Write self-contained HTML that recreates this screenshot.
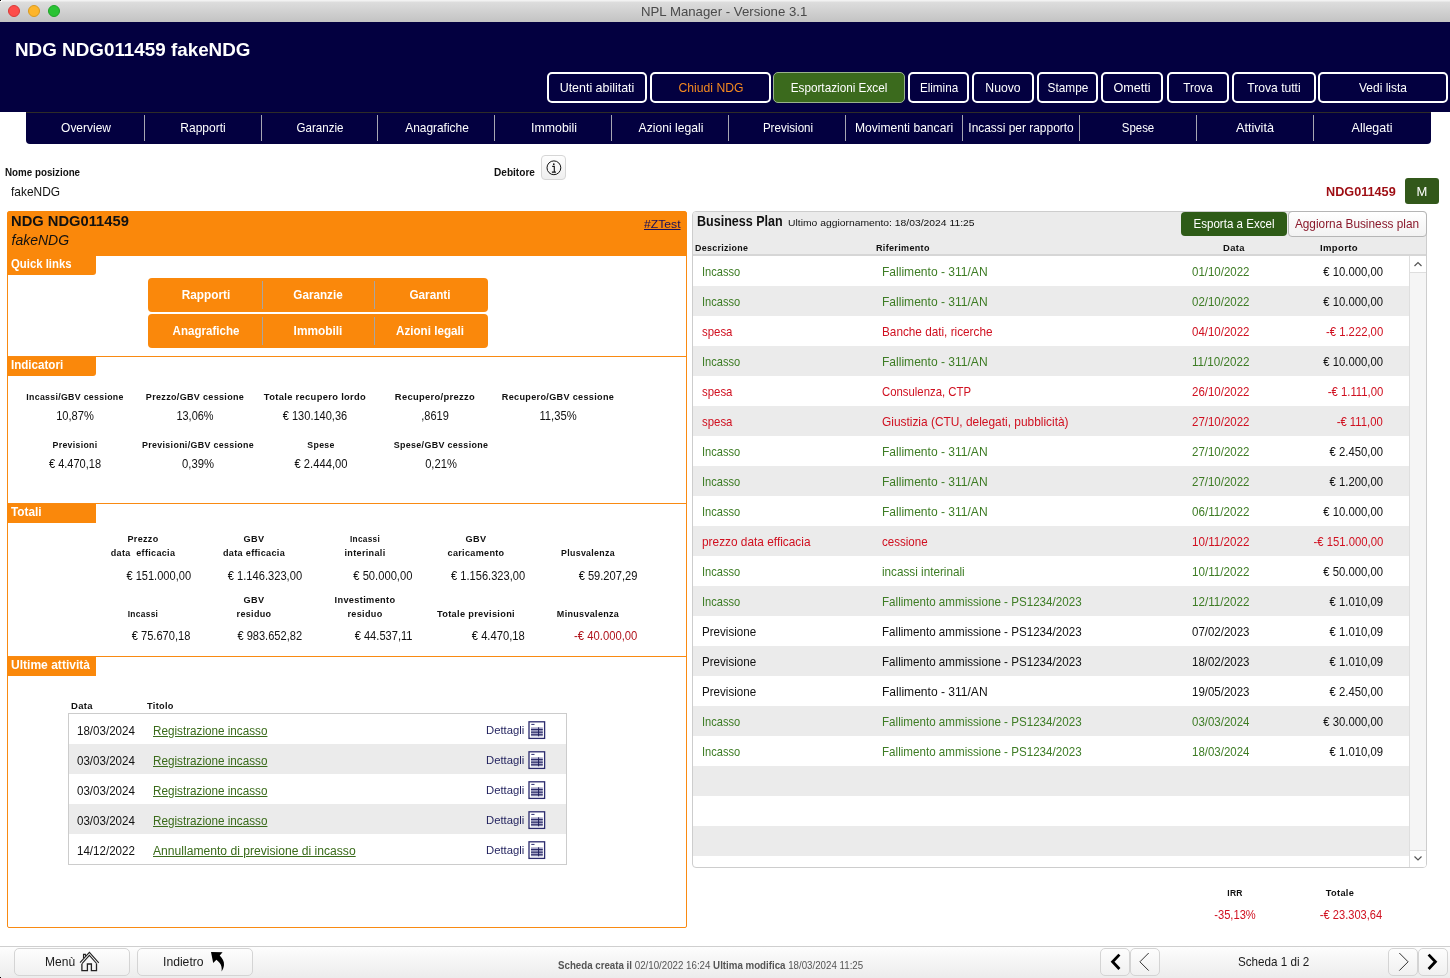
<!DOCTYPE html>
<html><head><meta charset="utf-8">
<style>
*{margin:0;padding:0;box-sizing:border-box}
html,body{width:1450px;height:978px;overflow:hidden;background:#fff;font-family:"Liberation Sans",sans-serif;color:#111}
.a{position:absolute}
.t{position:absolute;line-height:1;white-space:nowrap;}
svg{position:absolute;overflow:visible}
</style></head><body><div style="position:absolute;left:0;top:0;width:1450px;height:978px;will-change:transform">
<div class="a" style="left:0px;top:0px;width:1450px;height:22px;background:linear-gradient(#f2f2f2 0px,#f2f2f2 1px,#dddddd 2px,#c3c3c3 100%)"></div>
<div class="a" style="left:8.2px;top:5px;width:12px;height:12px;border-radius:50%;background:#fd4d4a;border:0.5px solid #d93a37"></div>
<div class="a" style="left:28px;top:5px;width:12px;height:12px;border-radius:50%;background:#fdb52b;border:0.5px solid #d99a1f"></div>
<div class="a" style="left:48px;top:5px;width:12px;height:12px;border-radius:50%;background:#2ac334;border:0.5px solid #1ea328"></div>
<div class="t" style="top:4.85px;font-size:13px;color:#4a4a4a;left:641.40px;transform:scaleX(1.017);transform-origin:0 0;">NPL Manager - Versione 3.1</div>
<div class="a" style="left:0px;top:22px;width:1450px;height:90px;background:#030040"></div>
<div class="t" style="top:40.15px;font-size:19px;font-weight:bold;color:#fff;left:14.50px;transform:scaleX(0.991);transform-origin:0 0;">NDG NDG011459 fakeNDG</div>
<div class="a" style="left:547px;top:72px;width:100px;height:31px;border-radius:5px;border:2px solid #fff;"></div>
<div class="t" style="top:80.85px;font-size:13px;color:#fff;left:297.00px;width:600px;text-align:center;transform:scaleX(0.957);transform-origin:50% 0;">Utenti abilitati</div>
<div class="a" style="left:650px;top:72px;width:121px;height:31px;border-radius:5px;border:2px solid #fff;"></div>
<div class="t" style="top:80.85px;font-size:13px;color:#f5891f;left:410.50px;width:600px;text-align:center;transform:scaleX(0.937);transform-origin:50% 0;">Chiudi NDG</div>
<div class="a" style="left:773px;top:72px;width:132px;height:31px;border-radius:5px;background:#3b6a1d;border:1px solid #9ab38c;"></div>
<div class="t" style="top:80.85px;font-size:13px;color:#fff;left:539.00px;width:600px;text-align:center;transform:scaleX(0.903);transform-origin:50% 0;">Esportazioni Excel</div>
<div class="a" style="left:908px;top:72px;width:61px;height:31px;border-radius:5px;border:2px solid #fff;"></div>
<div class="t" style="top:80.85px;font-size:13px;color:#fff;left:638.50px;width:600px;text-align:center;transform:scaleX(0.897);transform-origin:50% 0;">Elimina</div>
<div class="a" style="left:972px;top:72px;width:62px;height:31px;border-radius:5px;border:2px solid #fff;"></div>
<div class="t" style="top:80.85px;font-size:13px;color:#fff;left:703.00px;width:600px;text-align:center;transform:scaleX(0.940);transform-origin:50% 0;">Nuovo</div>
<div class="a" style="left:1037px;top:72px;width:61px;height:31px;border-radius:5px;border:2px solid #fff;"></div>
<div class="t" style="top:80.85px;font-size:13px;color:#fff;left:767.50px;width:600px;text-align:center;transform:scaleX(0.911);transform-origin:50% 0;">Stampe</div>
<div class="a" style="left:1101px;top:72px;width:62px;height:31px;border-radius:5px;border:2px solid #fff;"></div>
<div class="t" style="top:80.85px;font-size:13px;color:#fff;left:832.00px;width:600px;text-align:center;transform:scaleX(0.972);transform-origin:50% 0;">Ometti</div>
<div class="a" style="left:1167px;top:72px;width:62px;height:31px;border-radius:5px;border:2px solid #fff;"></div>
<div class="t" style="top:80.85px;font-size:13px;color:#fff;left:898.00px;width:600px;text-align:center;transform:scaleX(0.896);transform-origin:50% 0;">Trova</div>
<div class="a" style="left:1232px;top:72px;width:84px;height:31px;border-radius:5px;border:2px solid #fff;"></div>
<div class="t" style="top:80.85px;font-size:13px;color:#fff;left:974.00px;width:600px;text-align:center;transform:scaleX(0.931);transform-origin:50% 0;">Trova tutti</div>
<div class="a" style="left:1318px;top:72px;width:130px;height:31px;border-radius:5px;border:2px solid #fff;"></div>
<div class="t" style="top:80.85px;font-size:13px;color:#fff;left:1083.00px;width:600px;text-align:center;transform:scaleX(0.922);transform-origin:50% 0;">Vedi lista</div>
<div class="a" style="left:26px;top:112px;width:1405px;height:32px;background:#030040;border-radius:0 0 4px 4px"></div>
<div class="a" style="left:26px;top:112px;width:1405px;height:1px;background:#2e2c28"></div>
<div class="t" style="top:121.45px;font-size:13px;color:#fff;left:-213.85px;width:600px;text-align:center;transform:scaleX(0.920);transform-origin:50% 0;">Overview</div>
<div class="t" style="top:121.45px;font-size:13px;color:#fff;left:-96.95px;width:600px;text-align:center;transform:scaleX(0.924);transform-origin:50% 0;">Rapporti</div>
<div class="a" style="left:144px;top:115px;width:1px;height:26px;background:#a6a6b2"></div>
<div class="t" style="top:121.45px;font-size:13px;color:#fff;left:19.95px;width:600px;text-align:center;transform:scaleX(0.890);transform-origin:50% 0;">Garanzie</div>
<div class="a" style="left:261px;top:115px;width:1px;height:26px;background:#a6a6b2"></div>
<div class="t" style="top:121.45px;font-size:13px;color:#fff;left:136.85px;width:600px;text-align:center;transform:scaleX(0.916);transform-origin:50% 0;">Anagrafiche</div>
<div class="a" style="left:377px;top:115px;width:1px;height:26px;background:#a6a6b2"></div>
<div class="t" style="top:121.45px;font-size:13px;color:#fff;left:253.75px;width:600px;text-align:center;transform:scaleX(0.950);transform-origin:50% 0;">Immobili</div>
<div class="a" style="left:494px;top:115px;width:1px;height:26px;background:#a6a6b2"></div>
<div class="t" style="top:121.45px;font-size:13px;color:#fff;left:370.65px;width:600px;text-align:center;transform:scaleX(0.934);transform-origin:50% 0;">Azioni legali</div>
<div class="a" style="left:611px;top:115px;width:1px;height:26px;background:#a6a6b2"></div>
<div class="t" style="top:121.45px;font-size:13px;color:#fff;left:487.55px;width:600px;text-align:center;transform:scaleX(0.891);transform-origin:50% 0;">Previsioni</div>
<div class="a" style="left:728px;top:115px;width:1px;height:26px;background:#a6a6b2"></div>
<div class="t" style="top:121.45px;font-size:13px;color:#fff;left:604.45px;width:600px;text-align:center;transform:scaleX(0.931);transform-origin:50% 0;">Movimenti bancari</div>
<div class="a" style="left:845px;top:115px;width:1px;height:26px;background:#a6a6b2"></div>
<div class="t" style="top:121.45px;font-size:13px;color:#fff;left:721.35px;width:600px;text-align:center;transform:scaleX(0.917);transform-origin:50% 0;">Incassi per rapporto</div>
<div class="a" style="left:962px;top:115px;width:1px;height:26px;background:#a6a6b2"></div>
<div class="t" style="top:121.45px;font-size:13px;color:#fff;left:838.25px;width:600px;text-align:center;transform:scaleX(0.879);transform-origin:50% 0;">Spese</div>
<div class="a" style="left:1079px;top:115px;width:1px;height:26px;background:#a6a6b2"></div>
<div class="t" style="top:121.45px;font-size:13px;color:#fff;left:955.15px;width:600px;text-align:center;transform:scaleX(0.973);transform-origin:50% 0;">Attività</div>
<div class="a" style="left:1196px;top:115px;width:1px;height:26px;background:#a6a6b2"></div>
<div class="t" style="top:121.45px;font-size:13px;color:#fff;left:1072.05px;width:600px;text-align:center;transform:scaleX(0.957);transform-origin:50% 0;">Allegati</div>
<div class="a" style="left:1313px;top:115px;width:1px;height:26px;background:#a6a6b2"></div>
<div class="t" style="top:167.25px;font-size:11px;font-weight:bold;left:5.20px;transform:scaleX(0.890);transform-origin:0 0;">Nome posizione</div>
<div class="t" style="top:185.15px;font-size:13px;left:11.00px;transform:scaleX(0.917);transform-origin:0 0;">fakeNDG</div>
<div class="t" style="top:166.75px;font-size:11px;font-weight:bold;left:494.30px;transform:scaleX(0.917);transform-origin:0 0;">Debitore</div>
<div class="a" style="left:541px;top:155px;width:25px;height:25px;border:1px solid #d6d6d6;border-radius:4px;background:linear-gradient(#fefefe,#efefef)"></div>
<svg style="left:541px;top:155px" width="25" height="25" viewBox="0 0 25 25"><circle cx="12.9" cy="12.8" r="6.9" fill="none" stroke="#111" stroke-width="1"/><circle cx="12.8" cy="9.2" r="0.85" fill="#111"/><path d="M11.2 11.4H13.3V17M10.9 17.1H14.9" fill="none" stroke="#111" stroke-width="1.1"/></svg>
<div class="t" style="top:184.85px;font-size:13px;font-weight:bold;color:#9e0c12;left:1325.50px;transform:scaleX(0.974);transform-origin:0 0;">NDG011459</div>
<div class="a" style="left:1405px;top:178px;width:34px;height:26px;background:#32581a;border-radius:3px"></div>
<div class="t" style="top:184.95px;font-size:13px;color:#fff;left:1122.00px;width:600px;text-align:center;">M</div>
<div class="a" style="left:7px;top:211px;width:680px;height:717px;border:1px solid #f98a12;border-radius:3px 3px 2px 2px"></div>
<div class="a" style="left:7px;top:211px;width:680px;height:45px;background:#fa880b;border-radius:3px 3px 0 0"></div>
<div class="t" style="top:213.80px;font-size:14px;font-weight:bold;left:10.50px;transform:scaleX(1.052);transform-origin:0 0;">NDG NDG011459</div>
<div class="t" style="top:232.80px;font-size:14px;left:11.50px;font-style:italic;">fakeNDG</div>
<div class="t" style="top:218.65px;font-size:11px;color:#1a0f5a;left:643.50px;transform:scaleX(1.106);transform-origin:0 0;text-decoration:underline;">#ZTest</div>
<div class="a" style="left:7px;top:256px;width:89px;height:19px;background:#fa880b;border-radius:0 0 3px 0;"></div>
<div class="t" style="top:258.10px;font-size:12px;font-weight:bold;color:#fff;left:11.00px;transform:scaleX(0.945);transform-origin:0 0;">Quick links</div>
<div class="a" style="left:148px;top:278px;width:340px;height:34px;background:#fa880b;border-radius:4px"></div>
<div class="a" style="left:148px;top:314px;width:340px;height:34px;background:#fa880b;border-radius:4px"></div>
<div class="a" style="left:262px;top:281px;width:1px;height:28px;background:#a9a59f"></div>
<div class="a" style="left:374px;top:281px;width:1px;height:28px;background:#a9a59f"></div>
<div class="a" style="left:262px;top:317px;width:1px;height:28px;background:#a9a59f"></div>
<div class="a" style="left:374px;top:317px;width:1px;height:28px;background:#a9a59f"></div>
<div class="t" style="top:288.56px;font-size:12.4px;font-weight:bold;color:#fff;left:-94.50px;width:600px;text-align:center;transform:scaleX(0.952);transform-origin:50% 0;">Rapporti</div>
<div class="t" style="top:324.56px;font-size:12.4px;font-weight:bold;color:#fff;left:-94.50px;width:600px;text-align:center;transform:scaleX(0.932);transform-origin:50% 0;">Anagrafiche</div>
<div class="t" style="top:288.56px;font-size:12.4px;font-weight:bold;color:#fff;left:17.70px;width:600px;text-align:center;transform:scaleX(0.941);transform-origin:50% 0;">Garanzie</div>
<div class="t" style="top:324.56px;font-size:12.4px;font-weight:bold;color:#fff;left:17.70px;width:600px;text-align:center;transform:scaleX(0.958);transform-origin:50% 0;">Immobili</div>
<div class="t" style="top:288.56px;font-size:12.4px;font-weight:bold;color:#fff;left:130.30px;width:600px;text-align:center;transform:scaleX(0.945);transform-origin:50% 0;">Garanti</div>
<div class="t" style="top:324.56px;font-size:12.4px;font-weight:bold;color:#fff;left:130.30px;width:600px;text-align:center;transform:scaleX(0.940);transform-origin:50% 0;">Azioni legali</div>
<div class="a" style="left:7px;top:356px;width:680px;height:1px;background:#f98a12"></div>
<div class="a" style="left:7px;top:357px;width:89px;height:19px;background:#fa880b;border-radius:0 0 3px 0;"></div>
<div class="t" style="top:359.10px;font-size:12px;font-weight:bold;color:#fff;left:11.00px;transform:scaleX(0.965);transform-origin:0 0;">Indicatori</div>
<div class="t" style="top:392.47px;font-size:9.8px;font-weight:bold;letter-spacing:0.35px;left:-225.40px;width:600px;text-align:center;transform:scaleX(0.895);transform-origin:50% 0;">Incassi/GBV cessione</div>
<div class="t" style="top:409.70px;font-size:12px;left:-225.40px;width:600px;text-align:center;transform:scaleX(0.927);transform-origin:50% 0;">10,87%</div>
<div class="t" style="top:392.47px;font-size:9.8px;font-weight:bold;letter-spacing:0.35px;left:-105.20px;width:600px;text-align:center;transform:scaleX(0.921);transform-origin:50% 0;">Prezzo/GBV cessione</div>
<div class="t" style="top:409.70px;font-size:12px;left:-105.20px;width:600px;text-align:center;transform:scaleX(0.912);transform-origin:50% 0;">13,06%</div>
<div class="t" style="top:391.57px;font-size:9.8px;font-weight:bold;letter-spacing:0.35px;left:14.80px;width:600px;text-align:center;transform:scaleX(0.953);transform-origin:50% 0;">Totale recupero lordo</div>
<div class="t" style="top:409.70px;font-size:12px;left:14.80px;width:600px;text-align:center;transform:scaleX(0.920);transform-origin:50% 0;">&euro; 130.140,36</div>
<div class="t" style="top:392.47px;font-size:9.8px;font-weight:bold;letter-spacing:0.35px;left:134.80px;width:600px;text-align:center;transform:scaleX(0.954);transform-origin:50% 0;">Recupero/prezzo</div>
<div class="t" style="top:409.70px;font-size:12px;left:134.80px;width:600px;text-align:center;transform:scaleX(0.918);transform-origin:50% 0;">,8619</div>
<div class="t" style="top:392.47px;font-size:9.8px;font-weight:bold;letter-spacing:0.35px;left:257.60px;width:600px;text-align:center;transform:scaleX(0.927);transform-origin:50% 0;">Recupero/GBV cessione</div>
<div class="t" style="top:409.70px;font-size:12px;left:257.60px;width:600px;text-align:center;transform:scaleX(0.935);transform-origin:50% 0;">11,35%</div>
<div class="t" style="top:440.27px;font-size:9.8px;font-weight:bold;letter-spacing:0.35px;left:-225.40px;width:600px;text-align:center;transform:scaleX(0.892);transform-origin:50% 0;">Previsioni</div>
<div class="t" style="top:457.60px;font-size:12px;left:-225.40px;width:600px;text-align:center;transform:scaleX(0.919);transform-origin:50% 0;">&euro; 4.470,18</div>
<div class="t" style="top:440.27px;font-size:9.8px;font-weight:bold;letter-spacing:0.35px;left:-102.30px;width:600px;text-align:center;transform:scaleX(0.906);transform-origin:50% 0;">Previsioni/GBV cessione</div>
<div class="t" style="top:457.60px;font-size:12px;left:-102.30px;width:600px;text-align:center;transform:scaleX(0.938);transform-origin:50% 0;">0,39%</div>
<div class="t" style="top:440.27px;font-size:9.8px;font-weight:bold;letter-spacing:0.35px;left:20.60px;width:600px;text-align:center;transform:scaleX(0.892);transform-origin:50% 0;">Spese</div>
<div class="t" style="top:457.60px;font-size:12px;left:20.60px;width:600px;text-align:center;transform:scaleX(0.935);transform-origin:50% 0;">&euro; 2.444,00</div>
<div class="t" style="top:440.27px;font-size:9.8px;font-weight:bold;letter-spacing:0.35px;left:140.60px;width:600px;text-align:center;transform:scaleX(0.911);transform-origin:50% 0;">Spese/GBV cessione</div>
<div class="t" style="top:457.60px;font-size:12px;left:140.60px;width:600px;text-align:center;transform:scaleX(0.932);transform-origin:50% 0;">0,21%</div>
<div class="a" style="left:7px;top:503px;width:680px;height:1px;background:#f98a12"></div>
<div class="a" style="left:7px;top:504px;width:89px;height:19px;background:#fa880b;"></div>
<div class="t" style="top:506.10px;font-size:12px;font-weight:bold;color:#fff;left:11.00px;transform:scaleX(0.985);transform-origin:0 0;">Totali</div>
<div class="t" style="top:534.27px;font-size:9.8px;font-weight:bold;letter-spacing:0.35px;left:-157.30px;width:600px;text-align:center;transform:scaleX(0.920);transform-origin:50% 0;">Prezzo</div>
<div class="t" style="top:548.07px;font-size:9.8px;font-weight:bold;letter-spacing:0.35px;left:-157.30px;width:600px;text-align:center;transform:scaleX(0.922);transform-origin:50% 0;">data&nbsp; efficacia</div>
<div class="t" style="top:569.80px;font-size:12px;right:1259.30px;text-align:right;transform:scaleX(0.923);transform-origin:100% 0;">&euro; 151.000,00</div>
<div class="t" style="top:609.17px;font-size:9.8px;font-weight:bold;letter-spacing:0.35px;left:-157.30px;width:600px;text-align:center;transform:scaleX(0.855);transform-origin:50% 0;">Incassi</div>
<div class="t" style="top:629.60px;font-size:12px;right:1259.30px;text-align:right;transform:scaleX(0.926);transform-origin:100% 0;">&euro; 75.670,18</div>
<div class="t" style="top:534.27px;font-size:9.8px;font-weight:bold;letter-spacing:0.35px;left:-46.00px;width:600px;text-align:center;transform:scaleX(0.935);transform-origin:50% 0;">GBV</div>
<div class="t" style="top:548.07px;font-size:9.8px;font-weight:bold;letter-spacing:0.35px;left:-46.00px;width:600px;text-align:center;transform:scaleX(0.929);transform-origin:50% 0;">data efficacia</div>
<div class="t" style="top:569.80px;font-size:12px;right:1148.30px;text-align:right;transform:scaleX(0.928);transform-origin:100% 0;">&euro; 1.146.323,00</div>
<div class="t" style="top:595.17px;font-size:9.8px;font-weight:bold;letter-spacing:0.35px;left:-46.00px;width:600px;text-align:center;transform:scaleX(0.935);transform-origin:50% 0;">GBV</div>
<div class="t" style="top:609.17px;font-size:9.8px;font-weight:bold;letter-spacing:0.35px;left:-46.00px;width:600px;text-align:center;transform:scaleX(0.921);transform-origin:50% 0;">residuo</div>
<div class="t" style="top:629.60px;font-size:12px;right:1148.30px;text-align:right;transform:scaleX(0.923);transform-origin:100% 0;">&euro; 983.652,82</div>
<div class="t" style="top:534.27px;font-size:9.8px;font-weight:bold;letter-spacing:0.35px;left:64.80px;width:600px;text-align:center;transform:scaleX(0.844);transform-origin:50% 0;">Incassi</div>
<div class="t" style="top:548.07px;font-size:9.8px;font-weight:bold;letter-spacing:0.35px;left:64.80px;width:600px;text-align:center;transform:scaleX(0.925);transform-origin:50% 0;">interinali</div>
<div class="t" style="top:569.80px;font-size:12px;right:1037.30px;text-align:right;transform:scaleX(0.932);transform-origin:100% 0;">&euro; 50.000,00</div>
<div class="t" style="top:595.17px;font-size:9.8px;font-weight:bold;letter-spacing:0.35px;left:64.80px;width:600px;text-align:center;transform:scaleX(0.942);transform-origin:50% 0;">Investimento</div>
<div class="t" style="top:609.17px;font-size:9.8px;font-weight:bold;letter-spacing:0.35px;left:64.80px;width:600px;text-align:center;transform:scaleX(0.929);transform-origin:50% 0;">residuo</div>
<div class="t" style="top:629.60px;font-size:12px;right:1037.30px;text-align:right;transform:scaleX(0.925);transform-origin:100% 0;">&euro; 44.537,11</div>
<div class="t" style="top:534.27px;font-size:9.8px;font-weight:bold;letter-spacing:0.35px;left:176.30px;width:600px;text-align:center;transform:scaleX(0.935);transform-origin:50% 0;">GBV</div>
<div class="t" style="top:548.07px;font-size:9.8px;font-weight:bold;letter-spacing:0.35px;left:176.30px;width:600px;text-align:center;transform:scaleX(0.925);transform-origin:50% 0;">caricamento</div>
<div class="t" style="top:569.80px;font-size:12px;right:925.10px;text-align:right;transform:scaleX(0.924);transform-origin:100% 0;">&euro; 1.156.323,00</div>
<div class="t" style="top:609.17px;font-size:9.8px;font-weight:bold;letter-spacing:0.35px;left:176.30px;width:600px;text-align:center;transform:scaleX(0.939);transform-origin:50% 0;">Totale previsioni</div>
<div class="t" style="top:629.60px;font-size:12px;right:925.10px;text-align:right;transform:scaleX(0.933);transform-origin:100% 0;">&euro; 4.470,18</div>
<div class="t" style="top:548.07px;font-size:9.8px;font-weight:bold;letter-spacing:0.35px;left:288.20px;width:600px;text-align:center;transform:scaleX(0.898);transform-origin:50% 0;">Plusvalenza</div>
<div class="t" style="top:569.80px;font-size:12px;right:812.90px;text-align:right;transform:scaleX(0.927);transform-origin:100% 0;">&euro; 59.207,29</div>
<div class="t" style="top:609.17px;font-size:9.8px;font-weight:bold;letter-spacing:0.35px;left:288.20px;width:600px;text-align:center;transform:scaleX(0.918);transform-origin:50% 0;">Minusvalenza</div>
<div class="t" style="top:629.60px;font-size:12px;color:#b0141c;right:812.90px;text-align:right;transform:scaleX(0.939);transform-origin:100% 0;">-&euro; 40.000,00</div>
<div class="a" style="left:7px;top:656px;width:680px;height:1px;background:#f98a12"></div>
<div class="a" style="left:7px;top:657px;width:89px;height:19px;background:#fa880b;"></div>
<div class="t" style="top:659.10px;font-size:12px;font-weight:bold;color:#fff;left:11.00px;transform:scaleX(1.004);transform-origin:0 0;">Ultime attivit&agrave;</div>
<div class="t" style="top:701.27px;font-size:9.8px;font-weight:bold;letter-spacing:0.35px;left:71.40px;transform:scaleX(0.970);transform-origin:0 0;">Data</div>
<div class="t" style="top:701.27px;font-size:9.8px;font-weight:bold;letter-spacing:0.35px;left:146.90px;transform:scaleX(0.938);transform-origin:0 0;">Titolo</div>
<div class="a" style="left:68px;top:713px;width:499px;height:152px;border:1px solid #cccccc"></div>
<div class="a" style="left:69px;top:744px;width:497px;height:30px;background:#ebebeb"></div>
<div class="a" style="left:69px;top:804px;width:497px;height:30px;background:#ebebeb"></div>
<div class="t" style="top:724.84px;font-size:12.3px;left:77.00px;transform:scaleX(0.941);transform-origin:0 0;">18/03/2024</div>
<div class="t" style="top:724.84px;font-size:12.3px;color:#3a6b1a;left:153.30px;transform:scaleX(0.951);transform-origin:0 0;text-decoration:underline;text-underline-offset:1px;">Registrazione incasso</div>
<div class="t" style="top:724.55px;font-size:11px;color:#1f1f5c;left:485.60px;transform:scaleX(1.024);transform-origin:0 0;">Dettagli</div>
<svg style="left:528px;top:721px" width="18" height="18" viewBox="0 0 18 18"><rect x="1" y="0.8" width="15.6" height="16.6" fill="#fff" stroke="#2b2b6e" stroke-width="1.3"/><line x1="3.3" y1="3.4" x2="6.5" y2="3.4" stroke="#2b2b6e" stroke-width="1"/><rect x="3" y="6.3" width="11.8" height="9" fill="#a6a6c8"/><path d="M3 8.6H14.8M3 11.2H14.8M3 13.8H14.8M10.6 6.3V15.3" stroke="#1f1f5c" stroke-width="1"/></svg>
<div class="t" style="top:754.84px;font-size:12.3px;left:77.00px;transform:scaleX(0.941);transform-origin:0 0;">03/03/2024</div>
<div class="t" style="top:754.84px;font-size:12.3px;color:#3a6b1a;left:153.30px;transform:scaleX(0.951);transform-origin:0 0;text-decoration:underline;text-underline-offset:1px;">Registrazione incasso</div>
<div class="t" style="top:754.55px;font-size:11px;color:#1f1f5c;left:485.60px;transform:scaleX(1.024);transform-origin:0 0;">Dettagli</div>
<svg style="left:528px;top:751px" width="18" height="18" viewBox="0 0 18 18"><rect x="1" y="0.8" width="15.6" height="16.6" fill="#fff" stroke="#2b2b6e" stroke-width="1.3"/><line x1="3.3" y1="3.4" x2="6.5" y2="3.4" stroke="#2b2b6e" stroke-width="1"/><rect x="3" y="6.3" width="11.8" height="9" fill="#a6a6c8"/><path d="M3 8.6H14.8M3 11.2H14.8M3 13.8H14.8M10.6 6.3V15.3" stroke="#1f1f5c" stroke-width="1"/></svg>
<div class="t" style="top:784.84px;font-size:12.3px;left:77.00px;transform:scaleX(0.941);transform-origin:0 0;">03/03/2024</div>
<div class="t" style="top:784.84px;font-size:12.3px;color:#3a6b1a;left:153.30px;transform:scaleX(0.951);transform-origin:0 0;text-decoration:underline;text-underline-offset:1px;">Registrazione incasso</div>
<div class="t" style="top:784.55px;font-size:11px;color:#1f1f5c;left:485.60px;transform:scaleX(1.024);transform-origin:0 0;">Dettagli</div>
<svg style="left:528px;top:781px" width="18" height="18" viewBox="0 0 18 18"><rect x="1" y="0.8" width="15.6" height="16.6" fill="#fff" stroke="#2b2b6e" stroke-width="1.3"/><line x1="3.3" y1="3.4" x2="6.5" y2="3.4" stroke="#2b2b6e" stroke-width="1"/><rect x="3" y="6.3" width="11.8" height="9" fill="#a6a6c8"/><path d="M3 8.6H14.8M3 11.2H14.8M3 13.8H14.8M10.6 6.3V15.3" stroke="#1f1f5c" stroke-width="1"/></svg>
<div class="t" style="top:814.84px;font-size:12.3px;left:77.00px;transform:scaleX(0.941);transform-origin:0 0;">03/03/2024</div>
<div class="t" style="top:814.84px;font-size:12.3px;color:#3a6b1a;left:153.30px;transform:scaleX(0.951);transform-origin:0 0;text-decoration:underline;text-underline-offset:1px;">Registrazione incasso</div>
<div class="t" style="top:814.55px;font-size:11px;color:#1f1f5c;left:485.60px;transform:scaleX(1.024);transform-origin:0 0;">Dettagli</div>
<svg style="left:528px;top:811px" width="18" height="18" viewBox="0 0 18 18"><rect x="1" y="0.8" width="15.6" height="16.6" fill="#fff" stroke="#2b2b6e" stroke-width="1.3"/><line x1="3.3" y1="3.4" x2="6.5" y2="3.4" stroke="#2b2b6e" stroke-width="1"/><rect x="3" y="6.3" width="11.8" height="9" fill="#a6a6c8"/><path d="M3 8.6H14.8M3 11.2H14.8M3 13.8H14.8M10.6 6.3V15.3" stroke="#1f1f5c" stroke-width="1"/></svg>
<div class="t" style="top:844.84px;font-size:12.3px;left:77.00px;transform:scaleX(0.941);transform-origin:0 0;">14/12/2022</div>
<div class="t" style="top:844.84px;font-size:12.3px;color:#3a6b1a;left:153.30px;transform:scaleX(0.985);transform-origin:0 0;text-decoration:underline;text-underline-offset:1px;">Annullamento di previsione di incasso</div>
<div class="t" style="top:844.55px;font-size:11px;color:#1f1f5c;left:485.60px;transform:scaleX(1.024);transform-origin:0 0;">Dettagli</div>
<svg style="left:528px;top:841px" width="18" height="18" viewBox="0 0 18 18"><rect x="1" y="0.8" width="15.6" height="16.6" fill="#fff" stroke="#2b2b6e" stroke-width="1.3"/><line x1="3.3" y1="3.4" x2="6.5" y2="3.4" stroke="#2b2b6e" stroke-width="1"/><rect x="3" y="6.3" width="11.8" height="9" fill="#a6a6c8"/><path d="M3 8.6H14.8M3 11.2H14.8M3 13.8H14.8M10.6 6.3V15.3" stroke="#1f1f5c" stroke-width="1"/></svg>
<div class="a" style="left:692px;top:211px;width:735px;height:657px;border:1px solid #cdcdcd;border-radius:4px 4px 4px 4px;background:#fff"></div>
<div class="a" style="left:693px;top:212px;width:733px;height:42px;background:#ebebeb;border-radius:3px 3px 0 0"></div>
<div class="a" style="left:693px;top:254px;width:733px;height:2px;background:#d6d6d6"></div>
<div class="a" style="left:693px;top:286px;width:717px;height:30px;background:#ebebeb"></div>
<div class="a" style="left:693px;top:346px;width:717px;height:30px;background:#ebebeb"></div>
<div class="a" style="left:693px;top:406px;width:717px;height:30px;background:#ebebeb"></div>
<div class="a" style="left:693px;top:466px;width:717px;height:30px;background:#ebebeb"></div>
<div class="a" style="left:693px;top:526px;width:717px;height:30px;background:#ebebeb"></div>
<div class="a" style="left:693px;top:586px;width:717px;height:30px;background:#ebebeb"></div>
<div class="a" style="left:693px;top:646px;width:717px;height:30px;background:#ebebeb"></div>
<div class="a" style="left:693px;top:706px;width:717px;height:30px;background:#ebebeb"></div>
<div class="a" style="left:693px;top:766px;width:717px;height:30px;background:#ebebeb"></div>
<div class="a" style="left:693px;top:826px;width:717px;height:30px;background:#ebebeb"></div>
<div class="t" style="top:214.10px;font-size:14px;font-weight:bold;left:696.60px;transform:scaleX(0.895);transform-origin:0 0;">Business Plan</div>
<div class="t" style="top:217.93px;font-size:9.5px;left:787.70px;transform:scaleX(1.088);transform-origin:0 0;">Ultimo aggiornamento: 18/03/2024 11:25</div>
<div class="t" style="top:243.07px;font-size:9.8px;font-weight:bold;letter-spacing:0.35px;left:695.40px;transform:scaleX(0.906);transform-origin:0 0;">Descrizione</div>
<div class="t" style="top:243.07px;font-size:9.8px;font-weight:bold;letter-spacing:0.35px;left:876.40px;transform:scaleX(0.923);transform-origin:0 0;">Riferimento</div>
<div class="t" style="top:242.87px;font-size:9.8px;font-weight:bold;letter-spacing:0.35px;left:933.70px;width:600px;text-align:center;transform:scaleX(0.961);transform-origin:50% 0;">Data</div>
<div class="t" style="top:242.87px;font-size:9.8px;font-weight:bold;letter-spacing:0.35px;left:1039.30px;width:600px;text-align:center;transform:scaleX(0.975);transform-origin:50% 0;">Importo</div>
<div class="a" style="left:1181px;top:212px;width:106px;height:24px;background:#2e5b17;border-radius:4px"></div>
<div class="t" style="top:217.25px;font-size:13px;color:#fff;left:933.80px;width:600px;text-align:center;transform:scaleX(0.889);transform-origin:50% 0;">Esporta a Excel</div>
<div class="a" style="left:1288px;top:211px;width:139px;height:26px;background:linear-gradient(#ffffff,#f2f2f2);border:1px solid #b5b5b5;border-radius:4px"></div>
<div class="t" style="top:217.25px;font-size:13px;color:#8a1a2c;left:1057.20px;width:600px;text-align:center;transform:scaleX(0.909);transform-origin:50% 0;">Aggiorna Business plan</div>
<div class="a" style="left:1409px;top:256px;width:1px;height:611px;background:#dedede"></div>
<div class="a" style="left:1410px;top:256px;width:16px;height:611px;background:#f5f5f5;border-radius:0 0 3px 0"></div>
<div class="a" style="left:1410px;top:256px;width:16px;height:17px;background:#fff;border-bottom:1px solid #dedede"></div>
<div class="a" style="left:1410px;top:850px;width:16px;height:17px;background:#fff;border-top:1px solid #dedede;border-radius:0 0 3px 0"></div>
<svg style="left:1410px;top:256px" width="16" height="17"><path d="M4.5 10L8 6.5L11.5 10" fill="none" stroke="#555" stroke-width="1.2"/></svg>
<svg style="left:1410px;top:850px" width="16" height="17"><path d="M4.5 6.5L8 10L11.5 6.5" fill="none" stroke="#555" stroke-width="1.2"/></svg>
<div class="t" style="top:266.20px;font-size:12.7px;color:#3d7c24;left:701.50px;transform:scaleX(0.875);transform-origin:0 0;">Incasso</div>
<div class="t" style="top:266.20px;font-size:12.7px;color:#3d7c24;left:882.30px;transform:scaleX(0.950);transform-origin:0 0;">Fallimento - 311/AN</div>
<div class="t" style="top:266.20px;font-size:12.7px;color:#3d7c24;left:1191.80px;transform:scaleX(0.905);transform-origin:0 0;">01/10/2022</div>
<div class="t" style="top:266.20px;font-size:12.7px;right:67.10px;text-align:right;transform:scaleX(0.891);transform-origin:100% 0;">&euro; 10.000,00</div>
<div class="t" style="top:296.20px;font-size:12.7px;color:#3d7c24;left:701.50px;transform:scaleX(0.875);transform-origin:0 0;">Incasso</div>
<div class="t" style="top:296.20px;font-size:12.7px;color:#3d7c24;left:882.30px;transform:scaleX(0.950);transform-origin:0 0;">Fallimento - 311/AN</div>
<div class="t" style="top:296.20px;font-size:12.7px;color:#3d7c24;left:1191.80px;transform:scaleX(0.905);transform-origin:0 0;">02/10/2022</div>
<div class="t" style="top:296.20px;font-size:12.7px;right:67.10px;text-align:right;transform:scaleX(0.891);transform-origin:100% 0;">&euro; 10.000,00</div>
<div class="t" style="top:326.20px;font-size:12.7px;color:#d01020;left:701.50px;transform:scaleX(0.900);transform-origin:0 0;">spesa</div>
<div class="t" style="top:326.20px;font-size:12.7px;color:#d01020;left:882.30px;transform:scaleX(0.927);transform-origin:0 0;">Banche dati, ricerche</div>
<div class="t" style="top:326.20px;font-size:12.7px;color:#d01020;left:1191.80px;transform:scaleX(0.905);transform-origin:0 0;">04/10/2022</div>
<div class="t" style="top:326.20px;font-size:12.7px;color:#d01020;right:67.10px;text-align:right;transform:scaleX(0.891);transform-origin:100% 0;">-&euro; 1.222,00</div>
<div class="t" style="top:356.20px;font-size:12.7px;color:#3d7c24;left:701.50px;transform:scaleX(0.875);transform-origin:0 0;">Incasso</div>
<div class="t" style="top:356.20px;font-size:12.7px;color:#3d7c24;left:882.30px;transform:scaleX(0.950);transform-origin:0 0;">Fallimento - 311/AN</div>
<div class="t" style="top:356.20px;font-size:12.7px;color:#3d7c24;left:1191.80px;transform:scaleX(0.918);transform-origin:0 0;">11/10/2022</div>
<div class="t" style="top:356.20px;font-size:12.7px;right:67.10px;text-align:right;transform:scaleX(0.891);transform-origin:100% 0;">&euro; 10.000,00</div>
<div class="t" style="top:386.20px;font-size:12.7px;color:#d01020;left:701.50px;transform:scaleX(0.900);transform-origin:0 0;">spesa</div>
<div class="t" style="top:386.20px;font-size:12.7px;color:#d01020;left:882.30px;transform:scaleX(0.895);transform-origin:0 0;">Consulenza, CTP</div>
<div class="t" style="top:386.20px;font-size:12.7px;color:#d01020;left:1191.80px;transform:scaleX(0.905);transform-origin:0 0;">26/10/2022</div>
<div class="t" style="top:386.20px;font-size:12.7px;color:#d01020;right:67.10px;text-align:right;transform:scaleX(0.891);transform-origin:100% 0;">-&euro; 1.111,00</div>
<div class="t" style="top:416.20px;font-size:12.7px;color:#d01020;left:701.50px;transform:scaleX(0.900);transform-origin:0 0;">spesa</div>
<div class="t" style="top:416.20px;font-size:12.7px;color:#d01020;left:882.30px;transform:scaleX(0.938);transform-origin:0 0;">Giustizia (CTU, delegati, pubblicit&agrave;)</div>
<div class="t" style="top:416.20px;font-size:12.7px;color:#d01020;left:1191.80px;transform:scaleX(0.905);transform-origin:0 0;">27/10/2022</div>
<div class="t" style="top:416.20px;font-size:12.7px;color:#d01020;right:67.10px;text-align:right;transform:scaleX(0.891);transform-origin:100% 0;">-&euro; 111,00</div>
<div class="t" style="top:446.20px;font-size:12.7px;color:#3d7c24;left:701.50px;transform:scaleX(0.875);transform-origin:0 0;">Incasso</div>
<div class="t" style="top:446.20px;font-size:12.7px;color:#3d7c24;left:882.30px;transform:scaleX(0.950);transform-origin:0 0;">Fallimento - 311/AN</div>
<div class="t" style="top:446.20px;font-size:12.7px;color:#3d7c24;left:1191.80px;transform:scaleX(0.905);transform-origin:0 0;">27/10/2022</div>
<div class="t" style="top:446.20px;font-size:12.7px;right:67.10px;text-align:right;transform:scaleX(0.891);transform-origin:100% 0;">&euro; 2.450,00</div>
<div class="t" style="top:476.20px;font-size:12.7px;color:#3d7c24;left:701.50px;transform:scaleX(0.875);transform-origin:0 0;">Incasso</div>
<div class="t" style="top:476.20px;font-size:12.7px;color:#3d7c24;left:882.30px;transform:scaleX(0.950);transform-origin:0 0;">Fallimento - 311/AN</div>
<div class="t" style="top:476.20px;font-size:12.7px;color:#3d7c24;left:1191.80px;transform:scaleX(0.905);transform-origin:0 0;">27/10/2022</div>
<div class="t" style="top:476.20px;font-size:12.7px;right:67.10px;text-align:right;transform:scaleX(0.891);transform-origin:100% 0;">&euro; 1.200,00</div>
<div class="t" style="top:506.20px;font-size:12.7px;color:#3d7c24;left:701.50px;transform:scaleX(0.875);transform-origin:0 0;">Incasso</div>
<div class="t" style="top:506.20px;font-size:12.7px;color:#3d7c24;left:882.30px;transform:scaleX(0.950);transform-origin:0 0;">Fallimento - 311/AN</div>
<div class="t" style="top:506.20px;font-size:12.7px;color:#3d7c24;left:1191.80px;transform:scaleX(0.918);transform-origin:0 0;">06/11/2022</div>
<div class="t" style="top:506.20px;font-size:12.7px;right:67.10px;text-align:right;transform:scaleX(0.891);transform-origin:100% 0;">&euro; 10.000,00</div>
<div class="t" style="top:536.21px;font-size:12.7px;color:#d01020;left:701.50px;transform:scaleX(0.934);transform-origin:0 0;">prezzo data efficacia</div>
<div class="t" style="top:536.21px;font-size:12.7px;color:#d01020;left:882.30px;transform:scaleX(0.912);transform-origin:0 0;">cessione</div>
<div class="t" style="top:536.21px;font-size:12.7px;color:#d01020;left:1191.80px;transform:scaleX(0.918);transform-origin:0 0;">10/11/2022</div>
<div class="t" style="top:536.21px;font-size:12.7px;color:#d01020;right:67.10px;text-align:right;transform:scaleX(0.891);transform-origin:100% 0;">-&euro; 151.000,00</div>
<div class="t" style="top:566.21px;font-size:12.7px;color:#3d7c24;left:701.50px;transform:scaleX(0.875);transform-origin:0 0;">Incasso</div>
<div class="t" style="top:566.21px;font-size:12.7px;color:#3d7c24;left:882.30px;transform:scaleX(0.923);transform-origin:0 0;">incassi interinali</div>
<div class="t" style="top:566.21px;font-size:12.7px;color:#3d7c24;left:1191.80px;transform:scaleX(0.918);transform-origin:0 0;">10/11/2022</div>
<div class="t" style="top:566.21px;font-size:12.7px;right:67.10px;text-align:right;transform:scaleX(0.891);transform-origin:100% 0;">&euro; 50.000,00</div>
<div class="t" style="top:596.21px;font-size:12.7px;color:#3d7c24;left:701.50px;transform:scaleX(0.875);transform-origin:0 0;">Incasso</div>
<div class="t" style="top:596.21px;font-size:12.7px;color:#3d7c24;left:882.30px;transform:scaleX(0.916);transform-origin:0 0;">Fallimento ammissione - PS1234/2023</div>
<div class="t" style="top:596.21px;font-size:12.7px;color:#3d7c24;left:1191.80px;transform:scaleX(0.918);transform-origin:0 0;">12/11/2022</div>
<div class="t" style="top:596.21px;font-size:12.7px;right:67.10px;text-align:right;transform:scaleX(0.891);transform-origin:100% 0;">&euro; 1.010,09</div>
<div class="t" style="top:626.21px;font-size:12.7px;left:701.50px;transform:scaleX(0.914);transform-origin:0 0;">Previsione</div>
<div class="t" style="top:626.21px;font-size:12.7px;left:882.30px;transform:scaleX(0.916);transform-origin:0 0;">Fallimento ammissione - PS1234/2023</div>
<div class="t" style="top:626.21px;font-size:12.7px;left:1191.80px;transform:scaleX(0.905);transform-origin:0 0;">07/02/2023</div>
<div class="t" style="top:626.21px;font-size:12.7px;right:67.10px;text-align:right;transform:scaleX(0.891);transform-origin:100% 0;">&euro; 1.010,09</div>
<div class="t" style="top:656.21px;font-size:12.7px;left:701.50px;transform:scaleX(0.914);transform-origin:0 0;">Previsione</div>
<div class="t" style="top:656.21px;font-size:12.7px;left:882.30px;transform:scaleX(0.916);transform-origin:0 0;">Fallimento ammissione - PS1234/2023</div>
<div class="t" style="top:656.21px;font-size:12.7px;left:1191.80px;transform:scaleX(0.905);transform-origin:0 0;">18/02/2023</div>
<div class="t" style="top:656.21px;font-size:12.7px;right:67.10px;text-align:right;transform:scaleX(0.891);transform-origin:100% 0;">&euro; 1.010,09</div>
<div class="t" style="top:686.21px;font-size:12.7px;left:701.50px;transform:scaleX(0.914);transform-origin:0 0;">Previsione</div>
<div class="t" style="top:686.21px;font-size:12.7px;left:882.30px;transform:scaleX(0.950);transform-origin:0 0;">Fallimento - 311/AN</div>
<div class="t" style="top:686.21px;font-size:12.7px;left:1191.80px;transform:scaleX(0.905);transform-origin:0 0;">19/05/2023</div>
<div class="t" style="top:686.21px;font-size:12.7px;right:67.10px;text-align:right;transform:scaleX(0.891);transform-origin:100% 0;">&euro; 2.450,00</div>
<div class="t" style="top:716.21px;font-size:12.7px;color:#3d7c24;left:701.50px;transform:scaleX(0.875);transform-origin:0 0;">Incasso</div>
<div class="t" style="top:716.21px;font-size:12.7px;color:#3d7c24;left:882.30px;transform:scaleX(0.916);transform-origin:0 0;">Fallimento ammissione - PS1234/2023</div>
<div class="t" style="top:716.21px;font-size:12.7px;color:#3d7c24;left:1191.80px;transform:scaleX(0.905);transform-origin:0 0;">03/03/2024</div>
<div class="t" style="top:716.21px;font-size:12.7px;right:67.10px;text-align:right;transform:scaleX(0.891);transform-origin:100% 0;">&euro; 30.000,00</div>
<div class="t" style="top:746.21px;font-size:12.7px;color:#3d7c24;left:701.50px;transform:scaleX(0.875);transform-origin:0 0;">Incasso</div>
<div class="t" style="top:746.21px;font-size:12.7px;color:#3d7c24;left:882.30px;transform:scaleX(0.916);transform-origin:0 0;">Fallimento ammissione - PS1234/2023</div>
<div class="t" style="top:746.21px;font-size:12.7px;color:#3d7c24;left:1191.80px;transform:scaleX(0.905);transform-origin:0 0;">18/03/2024</div>
<div class="t" style="top:746.21px;font-size:12.7px;right:67.10px;text-align:right;transform:scaleX(0.891);transform-origin:100% 0;">&euro; 1.010,09</div>
<div class="t" style="top:888.17px;font-size:9.8px;font-weight:bold;letter-spacing:0.35px;left:934.50px;width:600px;text-align:center;transform:scaleX(0.866);transform-origin:50% 0;">IRR</div>
<div class="t" style="top:888.17px;font-size:9.8px;font-weight:bold;letter-spacing:0.35px;left:1039.90px;width:600px;text-align:center;transform:scaleX(0.941);transform-origin:50% 0;">Totale</div>
<div class="t" style="top:908.77px;font-size:12.5px;color:#d01020;left:934.70px;width:600px;text-align:center;transform:scaleX(0.893);transform-origin:50% 0;">-35,13%</div>
<div class="t" style="top:908.77px;font-size:12.5px;color:#d01020;right:67.40px;text-align:right;transform:scaleX(0.888);transform-origin:100% 0;">-&euro; 23.303,64</div>
<div class="a" style="left:0px;top:946px;width:1450px;height:32px;background:linear-gradient(#fdfdfd,#ececec);border-top:1px solid #cfcfcf"></div>
<div class="a" style="left:14px;top:948px;width:116px;height:28px;border:1px solid #d4d4d4;border-radius:5px;background:linear-gradient(#fdfdfd,#f0f0f0)"></div>
<div class="a" style="left:137px;top:948px;width:116px;height:28px;border:1px solid #d4d4d4;border-radius:5px;background:linear-gradient(#fdfdfd,#f0f0f0)"></div>
<div class="t" style="top:955.35px;font-size:13px;color:#1a1a1a;left:44.80px;transform:scaleX(0.926);transform-origin:0 0;">Men&ugrave;</div>
<svg style="left:76px;top:948px" width="28" height="28" viewBox="0 0 28 28"><g fill="none" stroke="#222" stroke-width="1.1" stroke-linejoin="miter"><path d="M4 14.7L13.4 4.3L22.8 14.9"/><path d="M6 15.7L13.4 7.3L20.6 15.5"/><path d="M7.5 10.2V6.4H9.4V8.4"/><path d="M5.9 15.7V22.6H11.4V16H15.4V22.6H20.5V15.5" stroke-width="1.3"/></g></svg>
<div class="t" style="top:955.35px;font-size:13px;color:#1a1a1a;left:162.50px;transform:scaleX(0.936);transform-origin:0 0;">Indietro</div>
<svg style="left:206px;top:948px" width="28" height="28" viewBox="0 0 28 28"><path d="M5 4L16.6 4.3L13.7 7.6C16.5 10.5 18.3 13.5 18 17C17.8 19.5 16.8 21.5 15.6 23.5C16 20 15.5 17 13.7 14.9C12.6 13.5 11.5 12.5 10.4 11.7L7.2 15Z" fill="#000"/></svg>
<div class="t" style="top:960.64px;font-size:10.3px;color:#555;left:558.30px;transform:scaleX(0.944);transform-origin:0 0;"><b>Scheda creata il</b> 02/10/2022 16:24 <b>Ultima modifica</b> 18/03/2024 11:25</div>
<div class="a" style="left:1100px;top:948px;width:30px;height:28px;border:1px solid #d4d4d4;border-radius:5px;background:linear-gradient(#fdfdfd,#f0f0f0)"></div>
<div class="a" style="left:1130px;top:948px;width:30px;height:28px;border:1px solid #d4d4d4;border-radius:5px;background:linear-gradient(#fdfdfd,#f0f0f0)"></div>
<div class="a" style="left:1388px;top:948px;width:30px;height:28px;border:1px solid #d4d4d4;border-radius:5px;background:linear-gradient(#fdfdfd,#f0f0f0)"></div>
<div class="a" style="left:1418px;top:948px;width:30px;height:28px;border:1px solid #d4d4d4;border-radius:5px;background:linear-gradient(#fdfdfd,#f0f0f0)"></div>
<svg style="left:1100px;top:948px" width="30" height="28"><path d="M19.4 6.6L12.6 13.8L19.4 21" fill="none" stroke="#000" stroke-width="2.8" stroke-linejoin="miter"/></svg>
<svg style="left:1130px;top:948px" width="30" height="28"><path d="M18.7 5L9.9 13.8L18.7 22.6" fill="none" stroke="#333" stroke-width="1"/></svg>
<svg style="left:1388px;top:948px" width="30" height="28"><path d="M11.3 5L20.1 13.8L11.3 22.6" fill="none" stroke="#333" stroke-width="1"/></svg>
<svg style="left:1418px;top:948px" width="30" height="28"><path d="M10.6 6.6L17.4 13.8L10.6 21" fill="none" stroke="#000" stroke-width="2.8" stroke-linejoin="miter"/></svg>
<div class="t" style="top:954.95px;font-size:13px;color:#1a1a1a;left:1238.20px;transform:scaleX(0.897);transform-origin:0 0;">Scheda 1 di 2</div>
<div class="a" style="left:0;top:0;width:2px;height:2px;background:#fff"></div><div class="a" style="left:0;top:0;width:1px;height:1px;background:#000"></div><div class="a" style="left:0;top:977px;width:1px;height:1px;background:#000"></div>
</div></body></html>
